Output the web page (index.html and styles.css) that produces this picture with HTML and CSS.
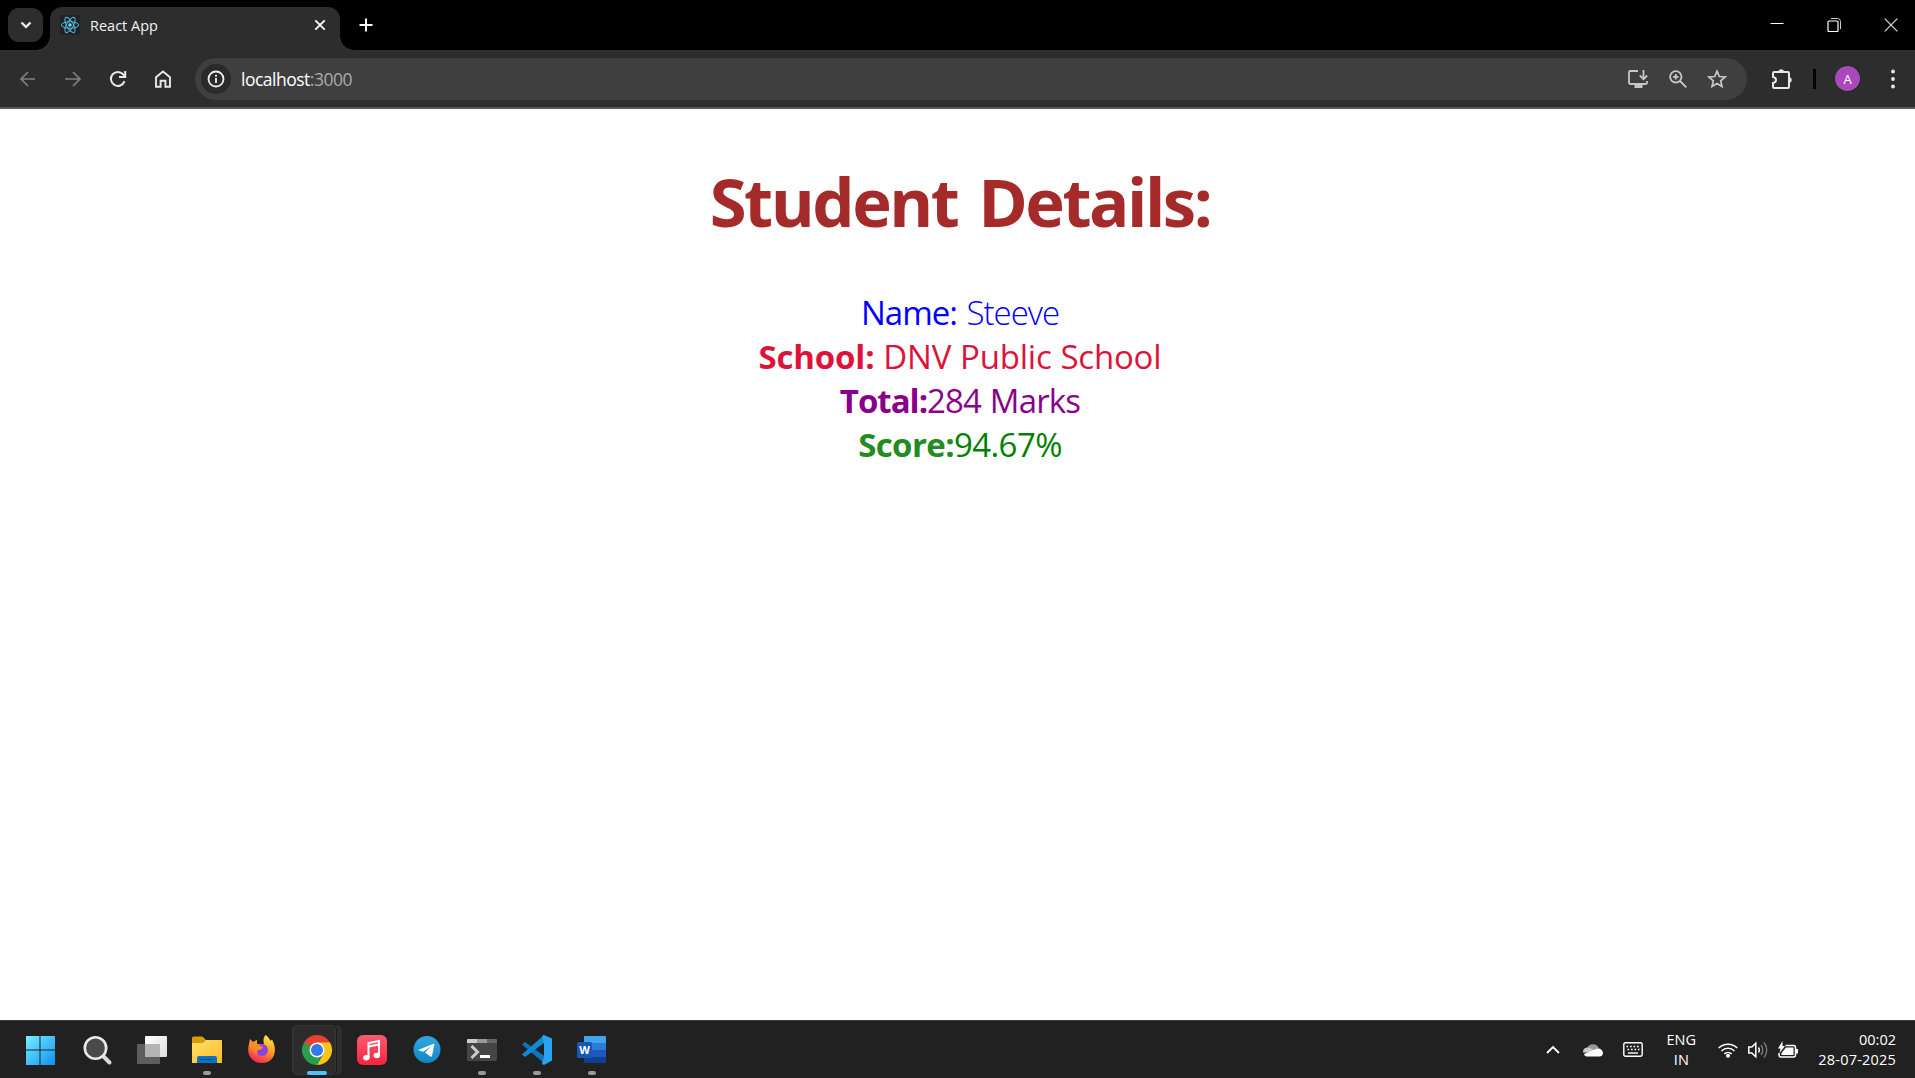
FILE: index.html
```html
<!DOCTYPE html>
<html lang="en">
<head>
<meta charset="utf-8">
<title>React App</title>
<link rel="stylesheet" href="styles.css">
</head>
<body>
<header class="tabstrip">
  <button class="tab-search" aria-label="Search tabs"><svg width="35" height="34" viewBox="0 0 35 34"><path d="M13.5 14.5l4.5 4.5 4.500-4.500" fill="none" stroke="#fff" stroke-width="2.200"/></svg></button>
  <div class="tab">
    <svg class="favicon" width="20" height="20" viewBox="0 0 20 20"><rect width="20" height="20" rx="1" fill="#20232a"/><g fill="none" stroke="#53b8d0" stroke-width="1"><ellipse cx="10" cy="10" rx="8.600" ry="3.300"/><ellipse cx="10" cy="10" rx="8.600" ry="3.300" transform="rotate(60 10 10)"/><ellipse cx="10" cy="10" rx="8.600" ry="3.300" transform="rotate(120 10 10)"/></g><circle cx="10" cy="10" r="1.700" fill="#61dafb"/></svg>
    <span class="tab-title">React App</span>
    <svg class="tab-close" width="12" height="12" viewBox="0 0 12 12"><path d="M1.300 1.300l9.400 9.400M10.700 1.300L1.300 10.700" stroke="#fff" stroke-width="1.800"/></svg>
  </div>
  <svg class="new-tab" width="14" height="14" viewBox="0 0 14 14"><path d="M7 .5v13M.5 7h13" stroke="#fff" stroke-width="2"/></svg>
  <div class="window-buttons">
    <svg width="14" height="14" viewBox="0 0 14 14"><path d="M.5 5.500h13" stroke="#fff"/></svg>
    <svg width="14" height="14" viewBox="0 0 14 14"><path d="M4 .5h6.500a3 3 0 0 1 3 3V11" fill="none" stroke="#ccc"/><rect x="1" y="3" width="10" height="10.500" rx="1" fill="none" stroke="#fff" stroke-width="1.200"/></svg>
    <svg width="14" height="14" viewBox="0 0 14 14"><path d="M.7.7l12.600 12.600M13.300.7L.7 13.300" stroke="#ddd" stroke-width="1.200"/></svg>
  </div>
</header>
<nav class="toolbar">
  <div class="nav-buttons">
    <svg width="18" height="18" viewBox="0 0 18 18"><path d="M16 9H2.500M9 2L2 9l7 7" fill="none" stroke="#808080" stroke-width="1.700"/></svg>
    <svg width="18" height="18" viewBox="0 0 18 18"><path d="M1 9h14.500M9 2l7 7-7 7" fill="none" stroke="#808080" stroke-width="1.700"/></svg>
    <svg width="18" height="18" viewBox="0 0 18 18"><path d="M15.500 11.200A7 7 0 1 1 14.500 4.700L16 6.500M16.200 1v6H10" fill="none" stroke="#e8e8e8" stroke-width="2"/></svg>
    <svg width="18" height="18" viewBox="0 0 18 18"><path d="M2 7.200L9 1.500l7 5.700v9.600h-4.600v-6H6.600v6H2z" fill="none" stroke="#e8e8e8" stroke-width="1.900"/></svg>
  </div>
  <div class="omnibox">
    <span class="site-info"><svg width="18" height="18" viewBox="0 0 18 18"><circle cx="9" cy="9" r="7.500" fill="none" stroke="#eee" stroke-width="1.800"/><path d="M9 8v5M9 4.800v1.900" stroke="#eee" stroke-width="1.800"/></svg></span>
    <span class="url">localhost<span class="port">:3000</span></span>
    <div class="page-actions">
      <svg width="22" height="20" viewBox="0 0 22 20"><path d="M11 2H3.200Q2 2 2 3.200v10.600Q2 15 3.200 15h15.600q1.200 0 1.200-1.200V12M16.500 1v8.500M12.800 6.500l3.700 3.700 3.700-3.700" fill="none" stroke="#c7c7c7" stroke-width="1.800"/><path d="M7.500 15h8v4h-8z" fill="#c7c7c7"/></svg>
      <svg width="18" height="18" viewBox="0 0 18 18"><circle cx="6.800" cy="6.800" r="5.700" fill="none" stroke="#c7c7c7" stroke-width="1.800"/><path d="M11 11l6.300 6.300M6.800 4v5.600M4 6.800h5.600" stroke="#c7c7c7" stroke-width="1.800"/></svg>
      <svg width="20" height="20" viewBox="0 0 20 20"><path d="M10 2.200l2.300 5.300 5.800.5-4.400 3.800 1.300 5.700-5-3-5 3 1.300-5.700L1.900 8l5.800-.5z" fill="none" stroke="#c7c7c7" stroke-width="1.700"/></svg>
    </div>
  </div>
  <svg class="extensions" width="22" height="22" viewBox="0 0 22 22"><path d="M3.200 4h13.600q1.200 0 1.200 1.200v13.600q0 1.200-1.200 1.200H3.200Q2 20 2 18.800V15q3-.5 3-3T2 9V5.200Q2 4 3.200 4z" fill="none" stroke="#e8e8e8" stroke-width="2"/><path d="M7.500 4a2.700 2.700 0 0 1 5.400 0zM18 9.300a2.700 2.700 0 0 1 0 5.400z" fill="#e8e8e8"/></svg>
  <span class="divider"></span>
  <span class="avatar">A</span>
  <svg class="menu" width="4" height="20" viewBox="0 0 4 20"><g fill="#e8e8e8"><circle cx="2" cy="2.500" r="1.900"/><circle cx="2" cy="10" r="1.900"/><circle cx="2" cy="17.500" r="1.900"/></g></svg>
</nav>
<main class="page">
  <h1 class="heading">Student Details:</h1>
  <div class="details">
    <div class="row name"><span class="label">Name:</span><span class="value"> Steeve</span></div>
    <div class="row school"><b class="label">School:</b><span class="value"> DNV Public School</span></div>
    <div class="row total"><b class="label">Total:</b><span class="value">284 Marks</span></div>
    <div class="row score"><b class="label">Score:</b><span class="value">94.67%</span></div>
  </div>
</main>
<footer class="taskbar">
  <div class="apps">
    <span class="app start"><svg width="32" height="32" viewBox="0 0 32 32"><defs><linearGradient id="win" gradientUnits="userSpaceOnUse" x1="2" y1="2" x2="31" y2="31"><stop stop-color="#7af0ff"/><stop offset="1" stop-color="#0a90f5"/></linearGradient></defs><path d="M2 2h13.500v13.500H2zM16.500 2H31v13.500H16.500zM2 16.500h13.500V31H2zM16.500 16.500H31V31H16.500z" fill="url(#win)"/></svg></span>
    <span class="app"><svg width="32" height="32" viewBox="0 0 32 32"><path d="M22.500 22.500l6 6" stroke="#d5dae0" stroke-width="4" stroke-linecap="round"/><circle cx="14.500" cy="14" r="10.700" fill="#4a4a4a" stroke="#e8ebee" stroke-width="2.600"/></svg></span>
    <span class="app"><svg width="32" height="32" viewBox="0 0 32 32"><defs><linearGradient id="tv" x1="0" y1="0" x2="1" y2="1"><stop stop-color="#fff"/><stop offset="1" stop-color="#ddd"/></linearGradient></defs><rect x="1" y="10" width="23" height="20" rx="1" fill="#5e5e5e"/><rect x="9" y="2" width="22" height="21" rx="1" fill="url(#tv)"/><path d="M9 10h15v13H9z" fill="#b4b4b4"/></svg></span>
    <span class="app running"><svg width="32" height="32" viewBox="0 0 32 32"><defs><linearGradient id="fold" x1="0" y1="0" x2="1" y2="1"><stop stop-color="#ffe06a"/><stop offset="1" stop-color="#ffbd26"/></linearGradient></defs><path d="M1 4q0-1.500 1.500-1.500H11q1 0 2 1.500l2 2h14.500Q31 6 31 7.500V16H1z" fill="#dc9b08"/><path d="M1 9h11l3-3h15q1 0 1 1v22H1z" fill="url(#fold)"/><path d="M6 29v-5q0-2 2-2h16q2 0 2 2v5z" fill="#0b74c8"/><path d="M9.500 25.500h13" stroke="#064d8b" stroke-width="1.200"/></svg></span>
    <span class="app"><svg width="32" height="32" viewBox="0 0 32 32"><defs><linearGradient id="ff" x1=".8" y1="0" x2=".3" y2="1"><stop stop-color="#fff04d"/><stop offset=".45" stop-color="#ff9a20"/><stop offset="1" stop-color="#f52256"/></linearGradient></defs><path d="M19.500 1c2.500 1.500 4 3.500 5 6l1.500-1.500c6.500 12 1.500 23.500-10 23.500C5 29 0 20 3 10l1-5 3 3 4-2v4l7 0C17 7 17.500 3 19.500 1z" fill="url(#ff)"/><circle cx="16" cy="16" r="6" fill="#8545dc"/><path d="M3 11q5-3 9 0l5 2q-1 3-5 3-2 2 0 4-6-1-9-9z" fill="#ff8b20"/></svg></span>
    <span class="app active"><svg width="32" height="32" viewBox="0 0 32 32"><path d="M16 16L3 8.500A15 15 0 0 1 29 8.500z" fill="#e84133"/><path d="M16 16L3 8.500A15 15 0 0 0 16 31l6.500-11.250z" fill="#2a9f4a"/><path d="M16 16l0-7.500h13A15 15 0 0 1 16 31l6.500-11.250z" fill="#fcc41b"/><path d="M3 8.500h13v7.500H9z" fill="#e84133"/><path d="M3 8.500l6.500 11.250L16 16z" fill="#2a9f4a"/><circle cx="16" cy="16" r="7.500" fill="#fff"/><circle cx="16" cy="16" r="6" fill="#3479e9"/></svg></span>
    <span class="app"><svg width="32" height="32" viewBox="0 0 32 32"><defs><linearGradient id="mus" x1="0" y1="0" x2="0" y2="1"><stop stop-color="#fc5c73"/><stop offset="1" stop-color="#fa233c"/></linearGradient></defs><rect x="1" y="1" width="30" height="30" rx="6" fill="url(#mus)"/><path d="M12.500 24V9l10.500-2v14.500M12.500 12.500l10.500-2" fill="none" stroke="#fff" stroke-width="2"/><ellipse cx="10.300" cy="23.800" rx="3.200" ry="2.700" fill="#fff"/><ellipse cx="20.800" cy="21.500" rx="3.200" ry="2.700" fill="#fff"/></svg></span>
    <span class="app"><svg width="32" height="32" viewBox="0 0 32 32"><defs><linearGradient id="tg" x1="0" y1="0" x2="0" y2="1"><stop stop-color="#2fa8e0"/><stop offset="1" stop-color="#1286c4"/></linearGradient></defs><circle cx="16" cy="15.500" r="13.500" fill="url(#tg)"/><path d="M7 16L22.500 9.700q1-.3.800 1L21 22q-.5 1.300-1.700.5L14 18.500l6-6-8 5.200z" fill="#fff"/></svg></span>
    <span class="app running"><svg width="32" height="32" viewBox="0 0 32 32"><rect x="1" y="5" width="30" height="22" rx="1" fill="#454545"/><path d="M1 9V6q0-1 1-1h9v4z" fill="#ccc"/><path d="M11 5h10v4H11z" fill="#999"/><path d="M21 5h9q1 0 1 1v3H21z" fill="#666"/><path d="M5.500 12l6 6-6 6" fill="none" stroke="#ccc" stroke-width="3"/><path d="M14 22.500h10" stroke="#fff" stroke-width="3"/></svg></span>
    <span class="app running"><svg width="32" height="32" viewBox="0 0 32 32"><path d="M1 10.500l3-2.500L24 22.500V30z" fill="#0b76be"/><path d="M1 20.500L4 23l19-14V1z" fill="#118bd6"/><path d="M23 1L31 4.500v22L23 31l-2-1 2-7.500v-13L21 2z" fill="#29a4f2"/></svg></span>
    <span class="app running"><svg width="32" height="32" viewBox="0 0 32 32"><path d="M8 2h21q1 0 1 1v6H8z" fill="#41a5ee"/><path d="M8 9h22v7H8z" fill="#2b7cd3"/><path d="M8 16h22v7H8z" fill="#185abd"/><path d="M8 23h22v5q0 1-1 1H8z" fill="#103f91"/><rect x="1" y="8" width="15" height="16" rx="1.500" fill="#1a56b4"/><text x="8.500" y="20" class="word-letter">W</text></svg></span>
  </div>
  <div class="tray">
    <svg class="chevron" width="14" height="9" viewBox="0 0 14 9"><path d="M1 8l6-6 6 6" fill="none" stroke="#fff" stroke-width="1.800"/></svg>
    <svg class="cloud" width="20" height="14" viewBox="0 0 20 14"><path d="M4 6a6.200 6.200 0 0 1 12 0l-6 4z" fill="#999"/><path d="M0 9.500A4.500 4.500 0 0 1 6 4.700l12 5z" fill="#ccc"/><path d="M1 11l12-5q5-2 7 3.500 0 4-4 4H4q-2.500 0-3-2.500z" fill="#fff"/></svg>
    <svg class="keyboard" width="20" height="15" viewBox="0 0 20 15"><rect x=".8" y=".8" width="18.400" height="13.400" rx="1.600" fill="none" stroke="#fff" stroke-width="1.400"/><path d="M3.500 4.500h13M4.500 7.500h12" stroke="#fff" stroke-width="1.500" stroke-dasharray="1.700 1.800"/><path d="M5 11h10" stroke="#fff" stroke-width="1.400"/></svg>
    <div class="lang"><div>ENG</div><div>IN</div></div>
    <svg class="wifi" width="20" height="16" viewBox="0 0 20 16"><g fill="none" stroke="#fff" stroke-width="1.500"><path d="M.7 6a13.200 13.200 0 0 1 18.600 0M3.500 9a9.200 9.200 0 0 1 13 0M6.300 12a5.200 5.200 0 0 1 7.400 0"/></g><circle cx="10" cy="13.700" r="2" fill="#fff"/></svg>
    <svg class="volume" width="20" height="18" viewBox="0 0 20 18"><path d="M.8 6h3l4-3.800v13.600L3.800 12h-3z" fill="none" stroke="#fff" stroke-width="1.500"/><path d="M10.500 6.500q1.800 2.500 0 5" fill="none" stroke="#fff" stroke-width="1.400"/><path d="M13 4q3.600 5 0 10M16 1.500q5.500 7.500 0 15" fill="none" stroke="#777" stroke-width="1.400"/></svg>
    <svg class="battery" width="20" height="18" viewBox="0 0 20 18"><path d="M7.500 4.500h8q2 0 2 2v7.500q0 2-2 2H3q-2 0-2-2v-2" fill="none" stroke="#fff" stroke-width="1.500"/><path d="M8 6.500h7.500V14H3.500v-2z" fill="#fff"/><path d="M18 8h2v4.500h-2zM4.500 0L0 7.500h2.500L1.500 12 7 5H4.500z" fill="#fff"/></svg>
    <div class="clock"><div>00:02</div><div class="date">28-07-2025</div></div>
  </div>
</footer>
</body>
</html>
```
FILE: styles.css
```css
* { box-sizing: border-box; }
body {
  margin: 0;
  width: 1915px;
  height: 1078px;
  display: flex;
  flex-direction: column;
  overflow: hidden;
  background: #fff;
  font-family: "Open Sans", "Noto Sans", sans-serif;
}
svg { display: block; flex: none; }

.tabstrip {
  height: 50px;
  display: flex;
  align-items: center;
  padding-left: 8px;
  background: #000;
}
.tab-search {
  width: 35px;
  height: 34px;
  padding: 0;
  border: 0;
  border-radius: 11px;
  background: #2d2d2d;
}
.tab {
  position: relative;
  display: flex;
  align-items: center;
  align-self: flex-end;
  width: 290px;
  height: 43px;
  margin-left: 7px;
  padding: 0 14px 7px 10px;
  border-radius: 12px 12px 0 0;
  background: #2d2d2d;
}
.tab::before, .tab::after {
  content: "";
  position: absolute;
  bottom: 0;
  width: 14px;
  height: 14px;
}
.tab::before { left: -14px; background: radial-gradient(circle at 0 0, transparent 13.5px, #2d2d2d 14px); }
.tab::after { right: -14px; background: radial-gradient(circle at 100% 0, transparent 13.5px, #2d2d2d 14px); }
.tab-title { margin-left: 10px; font-size: 14.5px; letter-spacing: 0; color: #f2f2f2; }
.tab-close { margin-left: auto; }
.new-tab { margin-left: 19px; }
.window-buttons { display: flex; gap: 43px; margin-left: auto; padding-right: 17px; }

.toolbar {
  height: 59px;
  display: flex;
  align-items: center;
  padding-left: 19px;
  border-bottom: 2px solid #5a5858;
  background: #2d2d2d;
}
.nav-buttons { display: flex; gap: 27px; }
.omnibox {
  width: 1552px;
  height: 42px;
  display: flex;
  align-items: center;
  margin-left: 23px;
  padding: 0 20px 0 6px;
  border-radius: 21px;
  background: #3f3f3f;
}
.site-info {
  display: grid;
  place-items: center;
  width: 30px;
  height: 30px;
  border-radius: 50%;
  background: #2a2a2a;
}
.url { margin-left: 10px; font-size: 17.5px; letter-spacing: -.5px; color: #fff; }
.port { color: #aaa; }
.page-actions { display: flex; align-items: center; gap: 20px; margin-left: auto; }
.extensions { margin-left: 24px; }
.divider { width: 3px; height: 20px; margin-left: 20px; background: #000; }
.avatar {
  display: grid;
  place-items: center;
  width: 25px;
  height: 25px;
  margin-left: 19px;
  border-radius: 50%;
  background: #ab47bc;
  box-shadow: 0 0 0 1px #17351a;
  color: #fff;
  font-size: 13px;
}
.menu { margin-left: 31px; }

.page { flex: 1; text-align: center; padding: 46px 0 0 5px; }
.heading {
  margin: 0;
  color: brown;
  font-size: 67px;
  line-height: 92px;
  font-weight: 700;
  letter-spacing: -2.5px;
  word-spacing: 6px;
}
.details { margin-top: 44px; font-size: 33px; line-height: 44px; }
.row { height: 44px; white-space: pre; }
.name { color: blue; letter-spacing: -1px; word-spacing: 2px; }
.name .value { font-weight: 300; }
.school { color: crimson; letter-spacing: -.2px; word-spacing: .5px; }
.total { color: darkmagenta; letter-spacing: -.85px; word-spacing: 1px; }
.total .label { letter-spacing: -1px; }
.score { color: green; letter-spacing: -.6px; }
.score .label { color: forestgreen; }

.taskbar {
  height: 58px;
  display: flex;
  align-items: center;
  justify-content: space-between;
  padding: 0 19px 0 18px;
  border-top: 1px solid #3b3d3e;
  background: #212121;
  color: #fff;
}
.apps { display: flex; gap: 7px; }
.app {
  position: relative;
  display: grid;
  place-items: center;
  width: 48px;
  height: 50px;
}
.start { margin: 0 2px 0 -2px; }
.app svg { position: relative; }
.active::before {
  content: "";
  position: absolute;
  inset: 0 5px 0 -1px;
  border: 1px solid #363636;
  border-radius: 5px;
  background: #2c2c2c;
  box-shadow: 1px 0 0 #1c1c1c, 6px 0 0 #2e2e2e;
}
.running::after, .active::after {
  content: "";
  position: absolute;
  bottom: 0;
  left: 20px;
  width: 8px;
  height: 4px;
  border-radius: 2px;
  background: #999;
}
.active::after { left: 14px; width: 20px; background: #4cc2ff; }
.word-letter { fill: #fff; font-size: 11px; font-weight: 700; text-anchor: middle; }
.tray { display: flex; align-items: center; font-size: 14.5px; line-height: 20px; }
.cloud { margin-left: 23px; }
.keyboard { margin-left: 20px; }
.lang { width: 30px; margin-left: 23px; text-align: center; }
.wifi { margin-left: 22px; }
.volume { margin-left: 10px; }
.battery { margin-left: 10px; }
.clock { margin-left: 20px; text-align: right; }
.date { letter-spacing: .2px; }
```
